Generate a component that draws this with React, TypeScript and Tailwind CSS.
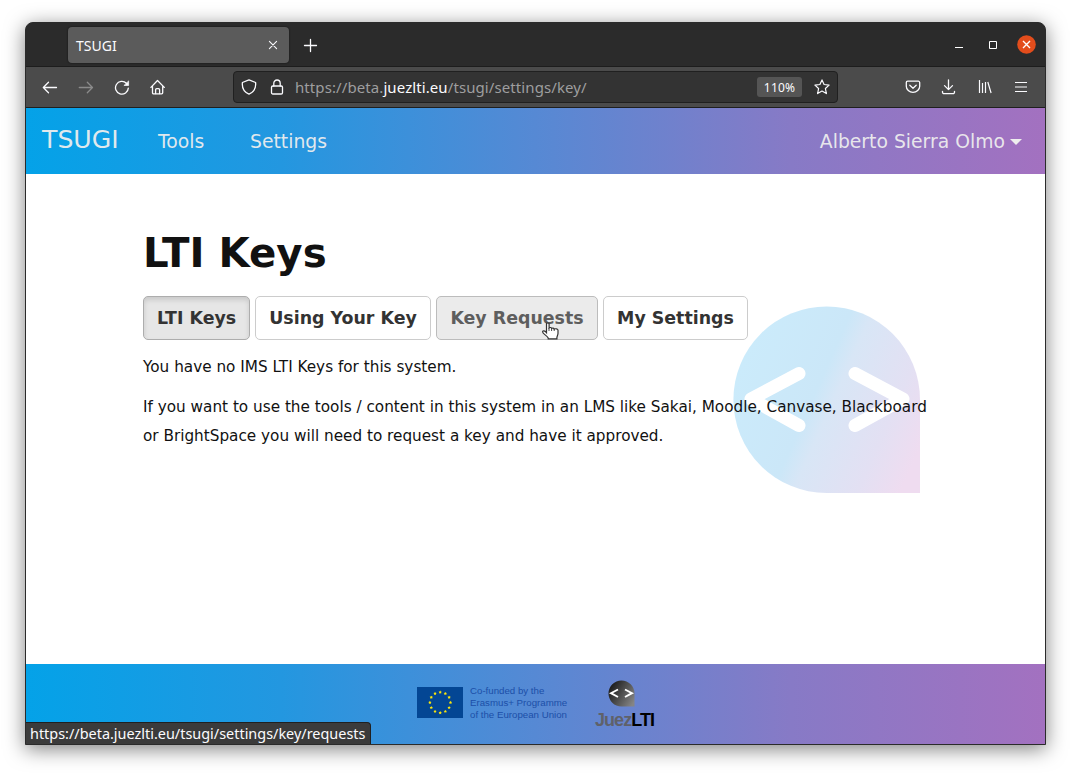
import React from "react";

const ui = "font-['Noto_Sans',sans-serif]";

function Icon({ children, className = "" }: { children: React.ReactNode; className?: string }) {
  return (
    <svg
      viewBox="0 0 16 16"
      className={`h-4 w-4 shrink-0 ${className}`}
      fill="none"
      stroke="currentColor"
      strokeWidth="1.3"
      strokeLinecap="round"
      strokeLinejoin="round"
    >
      {children}
    </svg>
  );
}

function TitleBar() {
  return (
    <div className="flex h-[44px] items-center border-b border-[#1d1d1d] bg-[#2b2b2b] text-[#fbfbfe]">
      <div className="ml-[42px] mt-px flex h-9 w-[221px] items-center justify-between rounded bg-[#5b5b5b] pl-2 pr-2 shadow-[0_0_2px_rgba(0,0,0,0.7)]">
        <span className={`${ui} mt-px text-[14px] leading-5`}>TSUGI</span>
        <Icon>
          <path d="M4.4 4.4l7.2 7.2M11.6 4.4l-7.2 7.2" strokeWidth="1.1" />
        </Icon>
      </div>
      <Icon className="ml-[13px] mt-px">
        <path d="M8.500 2.500v12M2.500 8.500h12" />
      </Icon>
      <div className="ml-auto flex items-center pr-[9px]">
        <svg viewBox="0 0 8 8" className="mr-[26px] h-2 w-2"><path d="M0 6.5h8" stroke="#fff" /></svg>
        <svg viewBox="0 0 8 8" className="mr-[20px] h-2 w-2"><path d="M.5.5h7v7h-7z" stroke="#fff" fill="none" /></svg>
        <svg viewBox="0 0 19 19" className="h-[19px] w-[19px]">
          <circle cx="9.5" cy="9.5" r="9.3" fill="#e34d1c" />
          <path d="M6 6l7 7M13 6l-7 7" stroke="#fff" strokeWidth="1.4" />
        </svg>
      </div>
    </div>
  );
}

function Toolbar() {
  return (
    <div className="flex h-[41px] items-center border-b border-[#1f1f1f] bg-[#4b4b4b] pl-4 text-[#fbfbfe]">
      <Icon><path d="M14.500 8.500H1.300M6.500 3.300L1.300 8.500l5.200 5.200" /></Icon>
      <Icon className="ml-5 text-[#8b8b8b]"><path d="M1.300 8.500h13.200M9.300 3.300l5.200 5.200-5.200 5.200" /></Icon>
      <Icon className="ml-5">
        <path d="M14.3 9.100A6.4 6.4 0 1 1 12.400 4.200" />
        <path d="M14.600 2.300v4.200h-4.300z" fill="currentColor" strokeWidth="0.7" />
      </Icon>
      <Icon className="ml-5">
        <path d="M.9 8.400L7.500 1.500l6.800 6.900M2.500 7.300v6.400a1.100 1.100 0 0 0 1.100 1.100h8a1.100 1.100 0 0 0 1.100-1.100V7.300" />
        <path d="M5.600 14.500v-3.800a1.100 1.100 0 0 1 1.100-1.100h1.800a1.100 1.100 0 0 1 1.100 1.100v3.800" />
      </Icon>
      <div className="ml-[67px] flex h-8 w-[605px] items-center rounded border border-[#202020] bg-[#333333] pl-[7px]">
        <Icon>
          <path d="M8 .8l6.6 2.7c.5 4.7-1.5 9.5-6.6 11.7C2.900 13 .9 8.200 1.400 3.500z" />
        </Icon>
        <Icon className="ml-3">
          <rect x="2.500" y="7" width="11" height="8" rx="1.300" />
          <path d="M4.800 7V4.200a3.200 3.200 0 0 1 6.400 0V7" />
        </Icon>
        <span className={`${ui} ml-[10px] whitespace-nowrap text-[15px] leading-5 tracking-[0.09px] text-[#9e9e9f]`}>
          https://beta.<span className="text-[#fbfbfe]">juezlti.eu</span>/tsugi/settings/key/
        </span>
        <span className={`${ui} ml-auto flex h-5 w-[45px] items-center justify-center rounded-[3px] bg-[#555555] pt-px text-[12px] tracking-[0.2px]`}>
          110%
        </span>
        <Icon className="ml-3 mr-[7px]">
          <path d="M8 .9l2.100 4.600 5 .6-3.700 3.400 1 5.100L8 12.100l-4.400 2.500 1-5.100L.9 6.100l5-.6z" strokeWidth="1.200" />
        </Icon>
      </div>
      <div className="ml-auto flex gap-5 pr-4">
        <Icon>
          <path d="M2.700 2.200h10.600a1.400 1.400 0 0 1 1.400 1.400v3.600a6.700 6.200 0 0 1-13.400 0V3.600a1.400 1.400 0 0 1 1.400-1.400z" />
          <path d="M4.800 6.300L8 9.300l3.200-3" />
        </Icon>
        <Icon>
          <path d="M7.500.8v9.800M3.500 6.600l4 4 4-4M1.500 12.300v.9a1.500 1.500 0 0 0 1.500 1.500h9a1.500 1.500 0 0 0 1.500-1.500v-.9" />
        </Icon>
        <Icon>
          <path d="M2.500 1v13M5.500 4v10M8.500 3v11M10.800 3l3.300 11" strokeWidth="1.200" strokeLinecap="butt" />
        </Icon>
        <Icon><path d="M2 3.500h12M2 8h12M2 12.500h12" strokeWidth="1.200" strokeLinecap="butt" /></Icon>
      </div>
    </div>
  );
}

const bar = "bg-[linear-gradient(90deg,#04a2e8_0%,#2397e0_25%,#5689d4_50%,#877ac6_75%,#a371c0_100%)]";

function NavBar() {
  return (
    <nav className={`${bar} flex h-[66px] items-center pl-[16px] pr-[23px] text-[18.800px] text-[#eeeeee]/95`}>
      <span className="w-[116px] pb-[3px] text-[25.200px]">TSUGI</span>
      <span className="w-[92px] pt-0.5">Tools</span>
      <span className="pt-0.5">Settings</span>
      <span className="ml-auto pt-0.5">Alberto Sierra Olmo</span>
      <svg viewBox="0 0 12 6" className="ml-[5px] mt-px h-[6px] w-3"><path d="M0 0h12L6 6z" fill="#eeeeee" /></svg>
    </nav>
  );
}

function Tab({ label, className }: { label: string; className: string }) {
  return (
    <button className={`flex h-[44px] items-center justify-center whitespace-nowrap rounded-[5px] border text-[17.400px] font-bold ${className}`}>
      {label}
    </button>
  );
}

function Watermark() {
  return (
    <svg viewBox="0 0 188 188" className="absolute left-[707px] top-[132px] h-[188px] w-[188px]">
      <defs>
        <linearGradient id="wm" gradientUnits="userSpaceOnUse" x1="8" y1="60" x2="188" y2="140">
          <stop offset="0" stopColor="#cbebfb" />
          <stop offset="0.4" stopColor="#cbe7f8" />
          <stop offset="0.5" stopColor="#d8e6f6" />
          <stop offset="0.8" stopColor="#e3e0f3" />
          <stop offset="1" stopColor="#efdcf0" />
        </linearGradient>
      </defs>
      <path d="M187 187H93.500A93.300 93.300 0 1 1 187 93.700z" fill="url(#wm)" />
      <path d="M66 67.500L18 93l48 26.500M122 67.500l48 25.500-48 26.500" fill="none" stroke="#fff" strokeWidth="13" strokeLinecap="round" strokeLinejoin="round" />
    </svg>
  );
}

function Pointer() {
  return (
    <svg viewBox="0 0 17 18" className="absolute right-[39px] top-[26px] h-[18px] w-[17px]">
      <path
        d="M4.500 1.900c0-1.500 2.600-1.500 2.600 0v4c.7-.7 2.300-.5 2.600.5.7-.6 2.200-.3 2.500.7.900-.6 3.800-.4 3.800 1.200v3c0 2-1.100 2.700-1.100 4.400v1.200H6.200v-1C5.300 14 .5 11.600.6 9.900c.2-1.500 2.100-1.400 3.900.8z"
        fill="#fff"
        stroke="#333"
        strokeWidth="1.200"
      />
      <path d="M7 6v3M9.600 6.500V9M12.200 7V9" stroke="#333" strokeWidth="0.900" />
    </svg>
  );
}

function Main() {
  return (
    <main className="relative h-[490px] bg-white pl-[117px] text-[#111111]">
      <Watermark />
      <div className="relative">
        <h1 className="pt-[55px] text-[40.300px] font-bold leading-[50px]">LTI Keys</h1>
        <div className="mt-[17px] flex gap-[5px] text-[#333333]">
          <Tab label="LTI Keys" className="w-[107px] border-[#adadad] bg-[#e6e6e6] shadow-[inset_0_3px_5px_rgba(0,0,0,0.125)]" />
          <Tab label="Using Your Key" className="w-[176px] border-[#cccccc] bg-white" />
          <div className="relative">
            <Tab label="Key Requests" className="w-[162px] border-[#bcbcbc] bg-[#ebebeb] text-[#5e5e5e]" />
            <Pointer />
          </div>
          <Tab label="My Settings" className="w-[145px] border-[#cccccc] bg-white" />
        </div>
        <p className="mt-[13px] text-[15.260px] leading-[29px]">You have no IMS LTI Keys for this system.</p>
        <p className="mt-[11px] whitespace-nowrap text-[15.260px] leading-[29px]">
          If you want to use the tools / content in this system in an LMS like Sakai, Moodle, Canvase, Blackboard
          <br />
          or BrightSpace you will need to request a key and have it approved.
        </p>
      </div>
    </main>
  );
}

const stars = Array.from({ length: 12 }, (_, i) => {
  const a = (i * Math.PI) / 6;
  return { x: 23.2 + 10.3 * Math.sin(a), y: 15.5 - 10.3 * Math.cos(a) };
});

function star(x: number, y: number) {
  return Array.from({ length: 10 }, (_, i) => {
    const r = i % 2 ? 0.95 : 1.7;
    const a = (i * Math.PI) / 5;
    return `${x + r * Math.sin(a)},${y - r * Math.cos(a)}`;
  }).join(" ");
}

function Footer() {
  return (
    <footer className={`${bar} relative flex h-[80px] pl-[391px]`}>
      <svg viewBox="0 0 46 31" className="mt-[23px] h-[31px] w-[46px]">
        <path d="M0 0h46v31H0z" fill="#034694" />
        {stars.map((s, i) => (
          <polygon key={i} points={star(s.x, s.y)} fill="#fde70b" />
        ))}
      </svg>
      <div className="ml-[7px] mt-[21px] w-[98px] whitespace-nowrap font-['Liberation_Sans',sans-serif] text-[9.700px] leading-[12px] text-[#1c4fa8]">
        Co-funded by the
        <br />
        Erasmus+ Programme
        <br />
        of the European Union
      </div>
      <div className="ml-[27px] mt-[16px] flex w-[61px] flex-col items-center">
        <svg viewBox="0 0 27 27" className="ml-[-8px] h-[27px] w-[27px]">
          <defs>
            <linearGradient id="lg" x1="0" y1="0.2" x2="1" y2="0.8">
              <stop offset="0" stopColor="#151515" />
              <stop offset="1" stopColor="#858585" />
            </linearGradient>
          </defs>
          <path d="M26.500 26.500H13.500A13 13 0 1 1 26.500 13.500z" fill="url(#lg)" />
          <path d="M10 9.500L3 13.200l7 3.800M17 9.500l7 3.700-7 3.800" stroke="#fff" strokeWidth="1.900" fill="none" />
        </svg>
        <div className="mt-[2px] self-start whitespace-nowrap font-['Liberation_Sans',sans-serif] text-[18px] font-bold leading-[22px] tracking-[-0.950px] text-[#5f6169]">
          Juez<span className="text-black">LTI</span>
        </div>
      </div>
      <div className={`${ui} absolute bottom-0 left-0 flex h-[22px] w-[345px] items-center whitespace-nowrap rounded-tr border-r border-t border-[#202020] bg-[#3b3b3b] pl-1 text-[14.430px] text-[#fbfbfe]`}>
        https://beta.juezlti.eu/tsugi/settings/key/requests
      </div>
    </footer>
  );
}

export default function App() {
  return (
    <div className="h-[773px] w-[1071px] overflow-hidden bg-white pl-[25px] pt-[22px] font-['DejaVu_Sans',sans-serif]">
      <div className="h-[723px] w-[1021px] overflow-hidden rounded-t-lg border border-[#2b2b2b] bg-[#2b2b2b] shadow-[0_4px_20px_rgba(0,0,0,0.5)]">
        <TitleBar />
        <Toolbar />
        <NavBar />
        <Main />
        <Footer />
      </div>
    </div>
  );
}
